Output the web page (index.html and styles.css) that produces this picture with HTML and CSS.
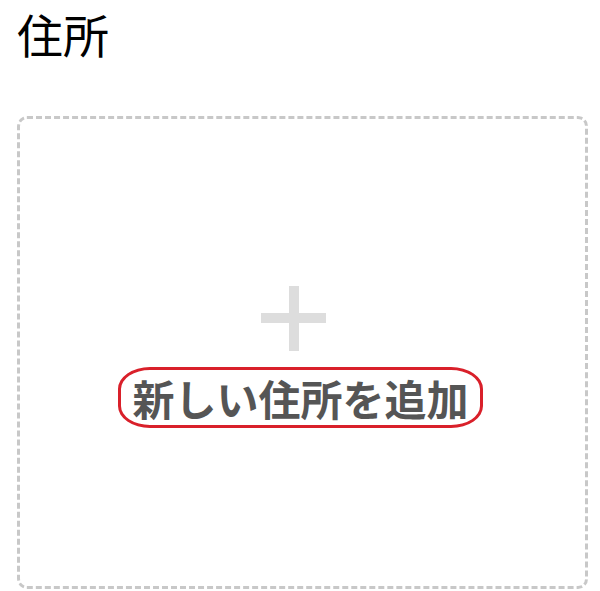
FILE: index.html
```html
<!DOCTYPE html>
<html lang="ja">
<head>
<meta charset="utf-8">
<link rel="stylesheet" href="styles.css">
</head>
<body>
<div class="page">
  <h1 class="title">住所</h1>
  <div class="add-card">
    <div class="add-inner">
      <svg class="plus" width="65" height="65" viewBox="0 0 65 65" aria-hidden="true">
        <rect x="28" y="0" width="10" height="65" fill="#dddddd"/>
        <rect x="0" y="27" width="65" height="10" fill="#dddddd"/>
      </svg>
      <span class="add-label">新しい住所を追加</span>
    </div>
  </div>
</div>
</body>
</html>
```
FILE: styles.css
```css
html, body {
  margin: 0;
  padding: 0;
  background: #ffffff;
}
.page {
  padding: 0 12px 0 17px;
  font-family: "Noto Sans CJK JP", "Noto Sans", sans-serif;
}
.title {
  margin: 0;
  padding-top: 0;
  height: 116px;
  font-size: 46px;
  font-weight: 400;
  line-height: 66px;
  color: #000000;
}
.add-card {
  box-sizing: border-box;
  height: 473px;
  border: 3px dashed #c8c8c8;
  border-radius: 10px;
  display: flex;
  align-items: center;
  justify-content: center;
}
.add-inner {
  display: flex;
  flex-direction: column;
  align-items: center;
  gap: 16px;
  margin-left: -4px;
  margin-top: 8px;
}
.plus {
  display: block;
  margin-right: 14px;
}
.add-label {
  display: block;
  padding: 0 11px;
  border: 3px solid #d9202a;
  border-radius: 32px / 22px;
  font-size: 42px;
  font-weight: 700;
  line-height: 55px;
  color: #555555;
}
```
